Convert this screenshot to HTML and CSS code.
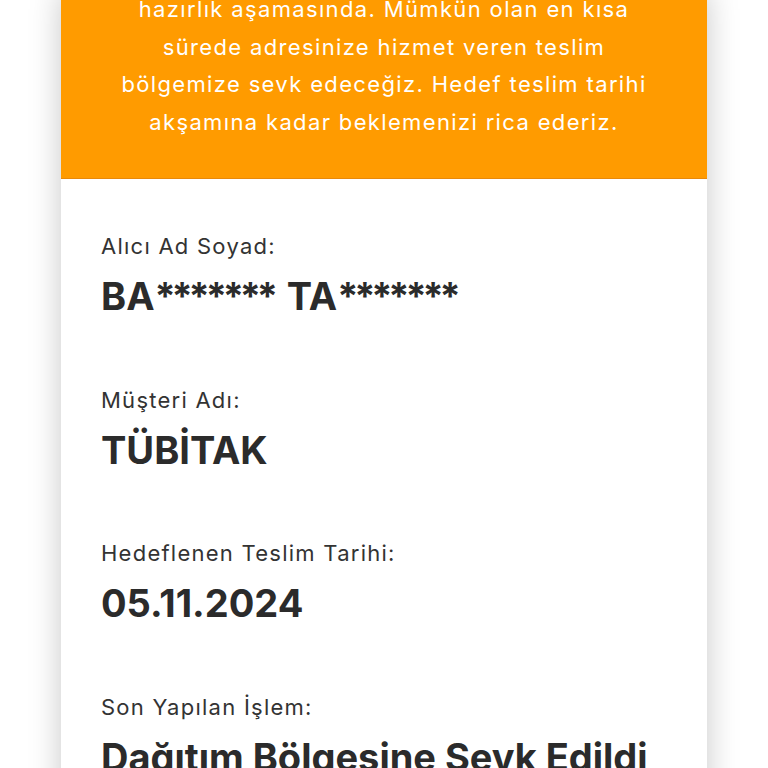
FILE: index.html
```html
<!DOCTYPE html>
<html lang="tr">
<head>
<meta charset="utf-8">
<link rel="stylesheet" href="styles.css">
</head>
<body>
<div class="card">
  <div class="notice">
    <p>hazırlık aşamasında. Mümkün olan en kısa<br>sürede adresinize hizmet veren teslim<br>bölgemize sevk edeceğiz. Hedef teslim tarihi<br>akşamına kadar beklemenizi rica ederiz.</p>
  </div>
  <div class="details">
    <div class="field">
      <div class="label">Alıcı Ad Soyad:</div>
      <div class="value">BA<span class="mask">*******</span> TA<span class="mask">*******</span></div>
    </div>
    <div class="field">
      <div class="label">Müşteri Adı:</div>
      <div class="value">TÜBİTAK</div>
    </div>
    <div class="field">
      <div class="label">Hedeflenen Teslim Tarihi:</div>
      <div class="value">05.11.2024</div>
    </div>
    <div class="field">
      <div class="label">Son Yapılan İşlem:</div>
      <div class="value">Dağıtım Bölgesine Sevk Edildi</div>
    </div>
  </div>
</div>
</body>
</html>
```
FILE: styles.css
```css
html, body {
  margin: 0;
  padding: 0;
  background: #ffffff;
  height: 768px;
  overflow: hidden;
}
body {
  font-family: Inter, "Noto Sans", sans-serif;
}
.card {
  width: 646px;
  margin: -9px 0 0 61px;
  background: #ffffff;
  box-shadow: 0 0 30px rgba(0, 0, 0, 0.22);
  min-height: 900px;
}
.notice {
  background: #ff9b00;
  border-bottom: 1px solid #e8890a;
  padding: 0 10px 37px;
}
.notice p {
  margin: 0;
  color: #ffffff;
  font-size: 22px;
  line-height: 37.5px;
  text-align: center;
  letter-spacing: 1.35px;
  white-space: nowrap;
}
.details {
  padding: 52px 40px 0;
  display: flex;
  flex-direction: column;
  gap: 65.7px;
}
.field {
  display: flex;
  flex-direction: column;
  gap: 12px;
}
.label {
  font-size: 22px;
  line-height: 30px;
  color: #333333;
  letter-spacing: 1.25px;
}
.value {
  font-size: 38px;
  line-height: 46px;
  font-weight: 700;
  color: #2b2b2b;
  white-space: nowrap;
}
.mask {
  letter-spacing: -4.2px;
  margin-right: 4px;
}
```
